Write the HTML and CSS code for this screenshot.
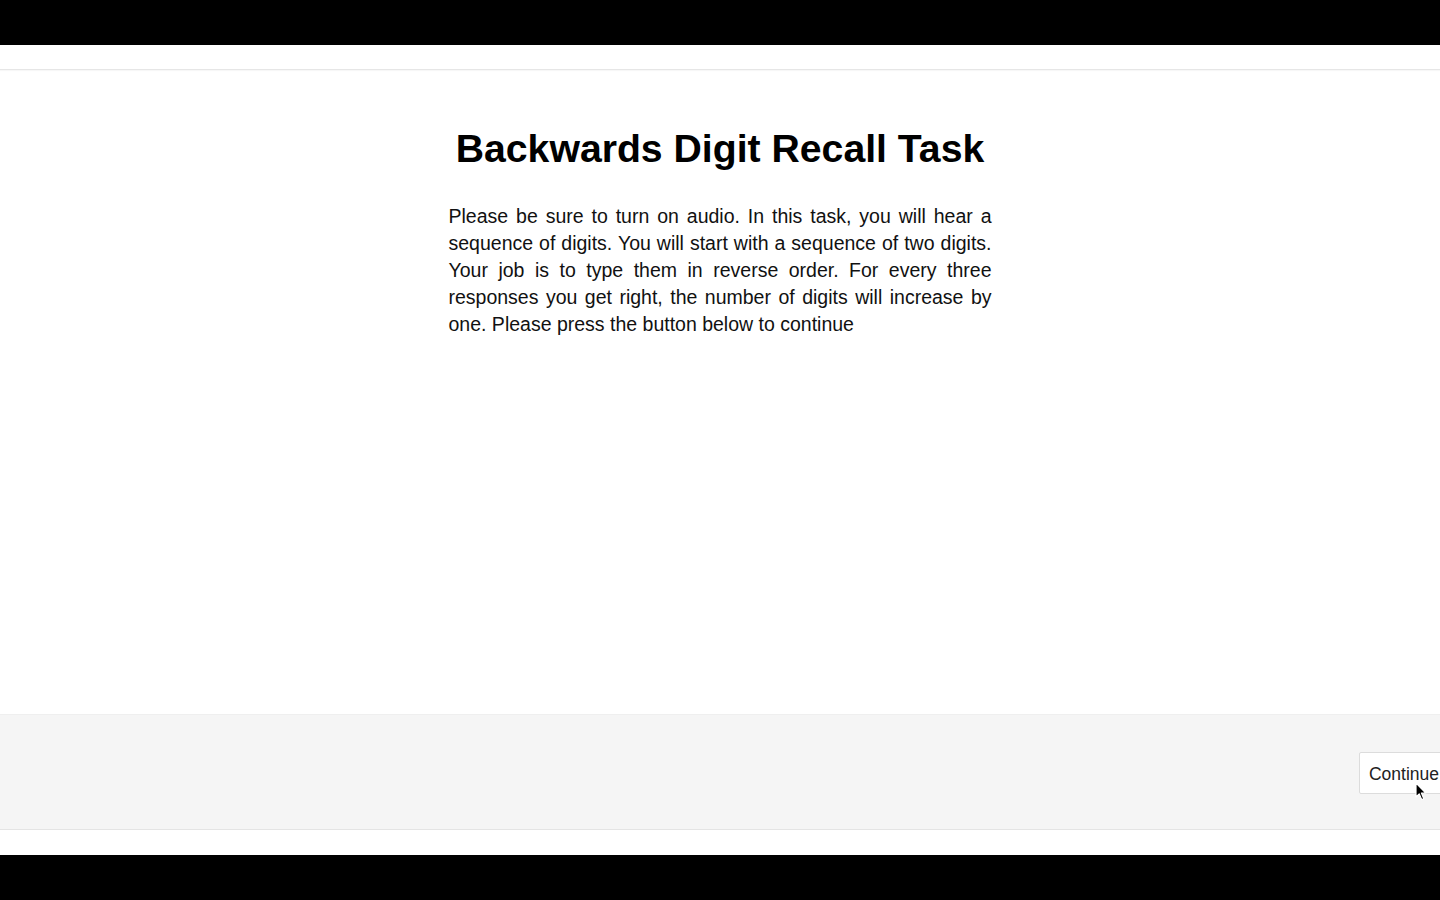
FILE: index.html
```html
<!DOCTYPE html>
<html lang="en">
<head>
<meta charset="utf-8">
<title>Backwards Digit Recall Task</title>
<link rel="stylesheet" href="styles.css">
</head>
<body>
<div class="letterbox"></div>
<div class="page">
  <div class="topbar"></div>
  <main class="main">
    <h1 class="title">Backwards Digit Recall Task</h1>
    <p class="intro">Please be sure to turn on audio. In this task, you will hear a sequence of digits. You will start with a sequence of two digits. Your job is to type them in reverse order. For every three responses you get right, the number of digits will increase by one. Please press the button below to continue</p>
  </main>
  <footer class="footer">
    <button class="btn" type="button">Continue</button>
    <svg class="cursor" width="12" height="19" viewBox="0 0 12 19"><path d="M1 1 L1 15 L4.2 11.8 L6.6 17.6 L8.8 16.7 L6.4 11 L10.8 11 Z" fill="#000" stroke="#fff" stroke-width="1.2" stroke-linejoin="round"/></svg>
  </footer>
  <div class="bottomgap"></div>
</div>
<div class="letterbox bottom"></div>
</body>
</html>
```

FILE: styles.css
```css
html, body {
  margin: 0;
  padding: 0;
  background: #000;
  overflow: hidden;
  height: 900px;
}
body {
  font-family: "Liberation Sans", Arial, sans-serif;
  color: #000;
}
.letterbox {
  height: 45px;
  background: #000;
}
.letterbox.bottom {
  height: 45px;
}
.page {
  background: #fff;
  height: 810px;
  display: flex;
  flex-direction: column;
  overflow: hidden;
}
.topbar {
  height: 24px;
  border-bottom: 1px solid #e6e6e6;
  box-shadow: 0 1px 1px rgba(0,0,0,0.03);
  flex: none;
}
.main {
  height: 644px;
  flex: none;
  display: flex;
  flex-direction: column;
  align-items: center;
}
.title {
  margin: 56px 0 0 0;
  font-size: 39.2px;
  line-height: 45px;
  font-weight: bold;
  color: #000;
}
.intro {
  margin: 32px 0 0 0;
  width: 543px;
  font-size: 19.5px;
  line-height: 27px;
  text-align: justify;
  color: #111;
}
.footer {
  position: relative;
  height: 114px;
  flex: none;
  background: #f5f5f5;
  border-top: 1px solid #efefef;
  border-bottom: 1px solid #e4e4e4;
  display: flex;
  align-items: center;
  justify-content: flex-end;
}
.btn {
  margin-right: -12px;
  margin-top: 2px;
  height: 42px;
  padding: 2px 12px 0 9px;
  background: #fff;
  border: 1px solid #dcdcdc;
  border-radius: 2px;
  font-family: "Liberation Sans", Arial, sans-serif;
  font-size: 17.5px;
  color: #222;
}
.cursor {
  position: absolute;
  left: 1415px;
  top: 67px;
}
.bottomgap {
  height: 25px;
  flex: none;
}
```
